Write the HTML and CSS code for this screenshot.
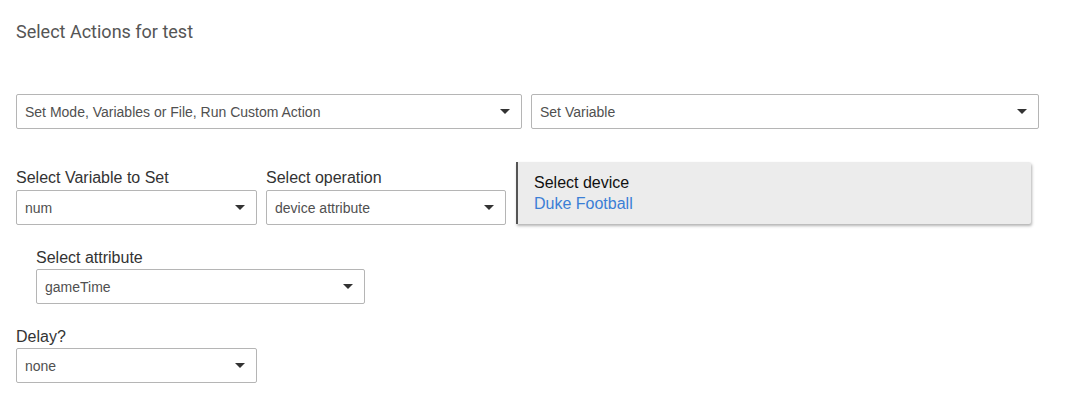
FILE: index.html
```html
<!DOCTYPE html>
<html lang="en">
<head>
    <meta charset="UTF-8">
    <meta name="viewport" content="width=device-width, initial-scale=1.0">
    <title>Select Actions</title>
    <link rel="stylesheet" href="styles.css">
</head>
<body>
    <div class="page">
        <h1 class="title">Select Actions for test</h1>

        <div class="row top-row">
            <div class="select wide">
                <span>Set Mode, Variables or File, Run Custom Action</span>
                <svg class="caret" width="10" height="5" viewBox="0 0 10 5"><path d="M0 0h10L5 5z"/></svg>
            </div>
            <div class="select wide second">
                <span>Set Variable</span>
                <svg class="caret" width="10" height="5" viewBox="0 0 10 5"><path d="M0 0h10L5 5z"/></svg>
            </div>
        </div>

        <div class="row var-row">
            <div class="field">
                <label>Select Variable to Set</label>
                <div class="select small">
                    <span>num</span>
                    <svg class="caret" width="10" height="5" viewBox="0 0 10 5"><path d="M0 0h10L5 5z"/></svg>
                </div>
            </div>
            <div class="field">
                <label>Select operation</label>
                <div class="select small op">
                    <span>device attribute</span>
                    <svg class="caret" width="10" height="5" viewBox="0 0 10 5"><path d="M0 0h10L5 5z"/></svg>
                </div>
            </div>
            <div class="device-card">
                <div class="device-label">Select device</div>
                <div class="device-name">Duke Football</div>
            </div>
        </div>

        <div class="field indent">
            <label>Select attribute</label>
            <div class="select attr">
                <span>gameTime</span>
                <svg class="caret" width="10" height="5" viewBox="0 0 10 5"><path d="M0 0h10L5 5z"/></svg>
            </div>
        </div>

        <div class="field delay">
            <label>Delay?</label>
            <div class="select small">
                <span>none</span>
                <svg class="caret" width="10" height="5" viewBox="0 0 10 5"><path d="M0 0h10L5 5z"/></svg>
            </div>
        </div>
    </div>
</body>
</html>
```

FILE: styles.css
```css
body {
    margin: 0;
    background-color: #fff;
    font-family: "Liberation Sans", Arial, sans-serif;
}

.page {
    padding: 21px 16px 0 16px;
}

.title {
    margin: 0;
    font-family: Roboto, "Liberation Sans", sans-serif;
    font-size: 18px;
    font-weight: 400;
    line-height: 21px;
    color: #555;
}

.row {
    display: flex;
}

.top-row {
    margin-top: 52px;
    gap: 9px;
}

.select {
    display: flex;
    align-items: center;
    justify-content: space-between;
    height: 35px;
    box-sizing: border-box;
    padding: 0 11px 0 8px;
    border: 1px solid #b5b5b5;
    border-radius: 2px;
    background-color: #fff;
    font-size: 14px;
    color: #505050;
}

.caret {
    fill: #333;
}

.wide {
    width: 506px;
}

.second {
    width: 508px;
}

.small {
    width: 241px;
}

.op {
    width: 240px;
}

.attr {
    width: 329px;
}

.var-row {
    margin-top: 33px;
    align-items: flex-end;
    gap: 9px;
}

.field label {
    display: block;
    font-size: 16px;
    line-height: 19px;
    color: #333;
    margin-bottom: 3px;
}

.device-card {
    width: 515px;
    height: 62px;
    box-sizing: border-box;
    margin-left: 1px;
    margin-bottom: 1px;
    padding: 10px 0 0 16px;
    background-color: #ececec;
    border-left: 2px solid #555;
    border-radius: 0 2px 2px 0;
    box-shadow: 1px 2px 3px rgba(0, 0, 0, 0.3);
    font-size: 16px;
    line-height: 21px;
}

.device-label {
    color: #111;
}

.device-name {
    color: #3b7fd6;
}

.indent {
    margin-top: 23px;
    margin-left: 20px;
}

.indent label,
.delay label {
    margin-bottom: 2px;
}

.delay {
    margin-top: 23px;
}
```
